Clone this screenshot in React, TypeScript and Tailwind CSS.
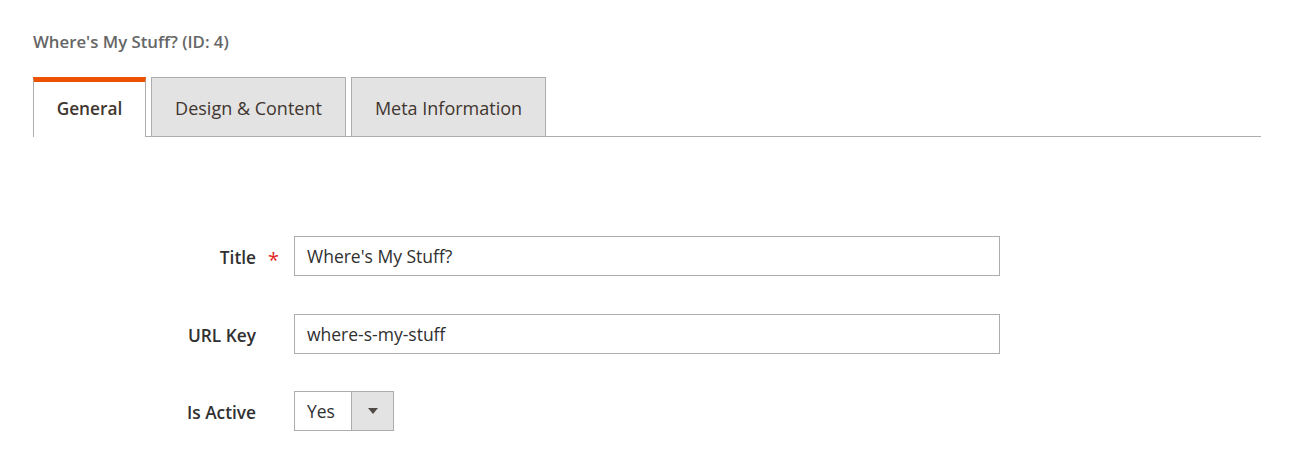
import { useState } from 'react';

const tabs = [
  { name: 'General', width: 'w-[113px]' },
  { name: 'Design & Content', width: 'w-[195px]' },
  { name: 'Meta Information', width: 'w-[195px]' },
];

function Row({ label, required, children }: { label: string; required?: boolean; children: React.ReactNode }) {
  return (
    <div className="flex items-center">
      <div className="w-[223px] pt-[3px] text-right text-[17.3px] font-semibold text-[#303030]">{label}</div>
      <div className="flex w-[38px] justify-center pr-[3px]">
        {required && <span className="mt-[8px] text-[20px] leading-none text-[#e22626]">*</span>}
      </div>
      {children}
    </div>
  );
}

export default function App() {
  const [active, setActive] = useState(0);

  return (
    <div className="min-h-[466px] bg-white pl-[33px] pr-[36px] pt-[31px]" style={{ fontFamily: '"Open Sans", "Noto Sans", sans-serif' }}>
      <div className="text-[16.8px] leading-[22px] font-semibold text-[#666666]">Where's My Stuff? (ID: 4)</div>

      <div className="mt-[24px] flex items-end gap-[5px] border-b border-[#adadad]">
        {tabs.map((t, i) =>
          i === active ? (
            <button
              key={t.name}
              onClick={() => setActive(i)}
              className={`-mb-px h-[60px] ${t.width} border-x border-t-[5px] border-x-[#adadad] border-t-[#eb5202] bg-white pb-[1px] text-[17.3px] font-semibold text-[#41362f]`}
            >
              {t.name}
            </button>
          ) : (
            <button
              key={t.name}
              onClick={() => setActive(i)}
              className={`h-[59px] ${t.width} border-x border-t border-[#adadad] bg-[#e3e3e3] pt-[2px] text-[18px] text-[#41362f]`}
            >
              {t.name}
            </button>
          )
        )}
      </div>

      <div className="mt-[99px] flex flex-col gap-[38px]">
        <Row label="Title" required>
          <div className="flex h-[40px] w-[706px] items-center border border-[#adadad] px-[12px] pt-[1px] text-[17.5px] text-[#303030]">
            Where's My Stuff?
          </div>
        </Row>
        <Row label="URL Key">
          <div className="flex h-[40px] w-[706px] items-center border border-[#adadad] px-[12px] pt-[1px] text-[17.5px] text-[#303030]">
            where-s-my-stuff
          </div>
        </Row>
        <div className="-mt-px">
          <Row label="Is Active">
            <div className="flex h-[40px] w-[100px] border border-[#adadad] text-[17.5px] text-[#303030]">
              <div className="flex w-[56px] items-center pl-[12px]">Yes</div>
              <div className="flex flex-1 items-center justify-center border-l border-[#adadad] bg-[#e3e3e3]">
                <svg width="10" height="6" viewBox="0 0 10 6">
                  <path d="M0 0 L10 0 L5 6 Z" fill="#514943" />
                </svg>
              </div>
            </div>
          </Row>
        </div>
      </div>
    </div>
  );
}
